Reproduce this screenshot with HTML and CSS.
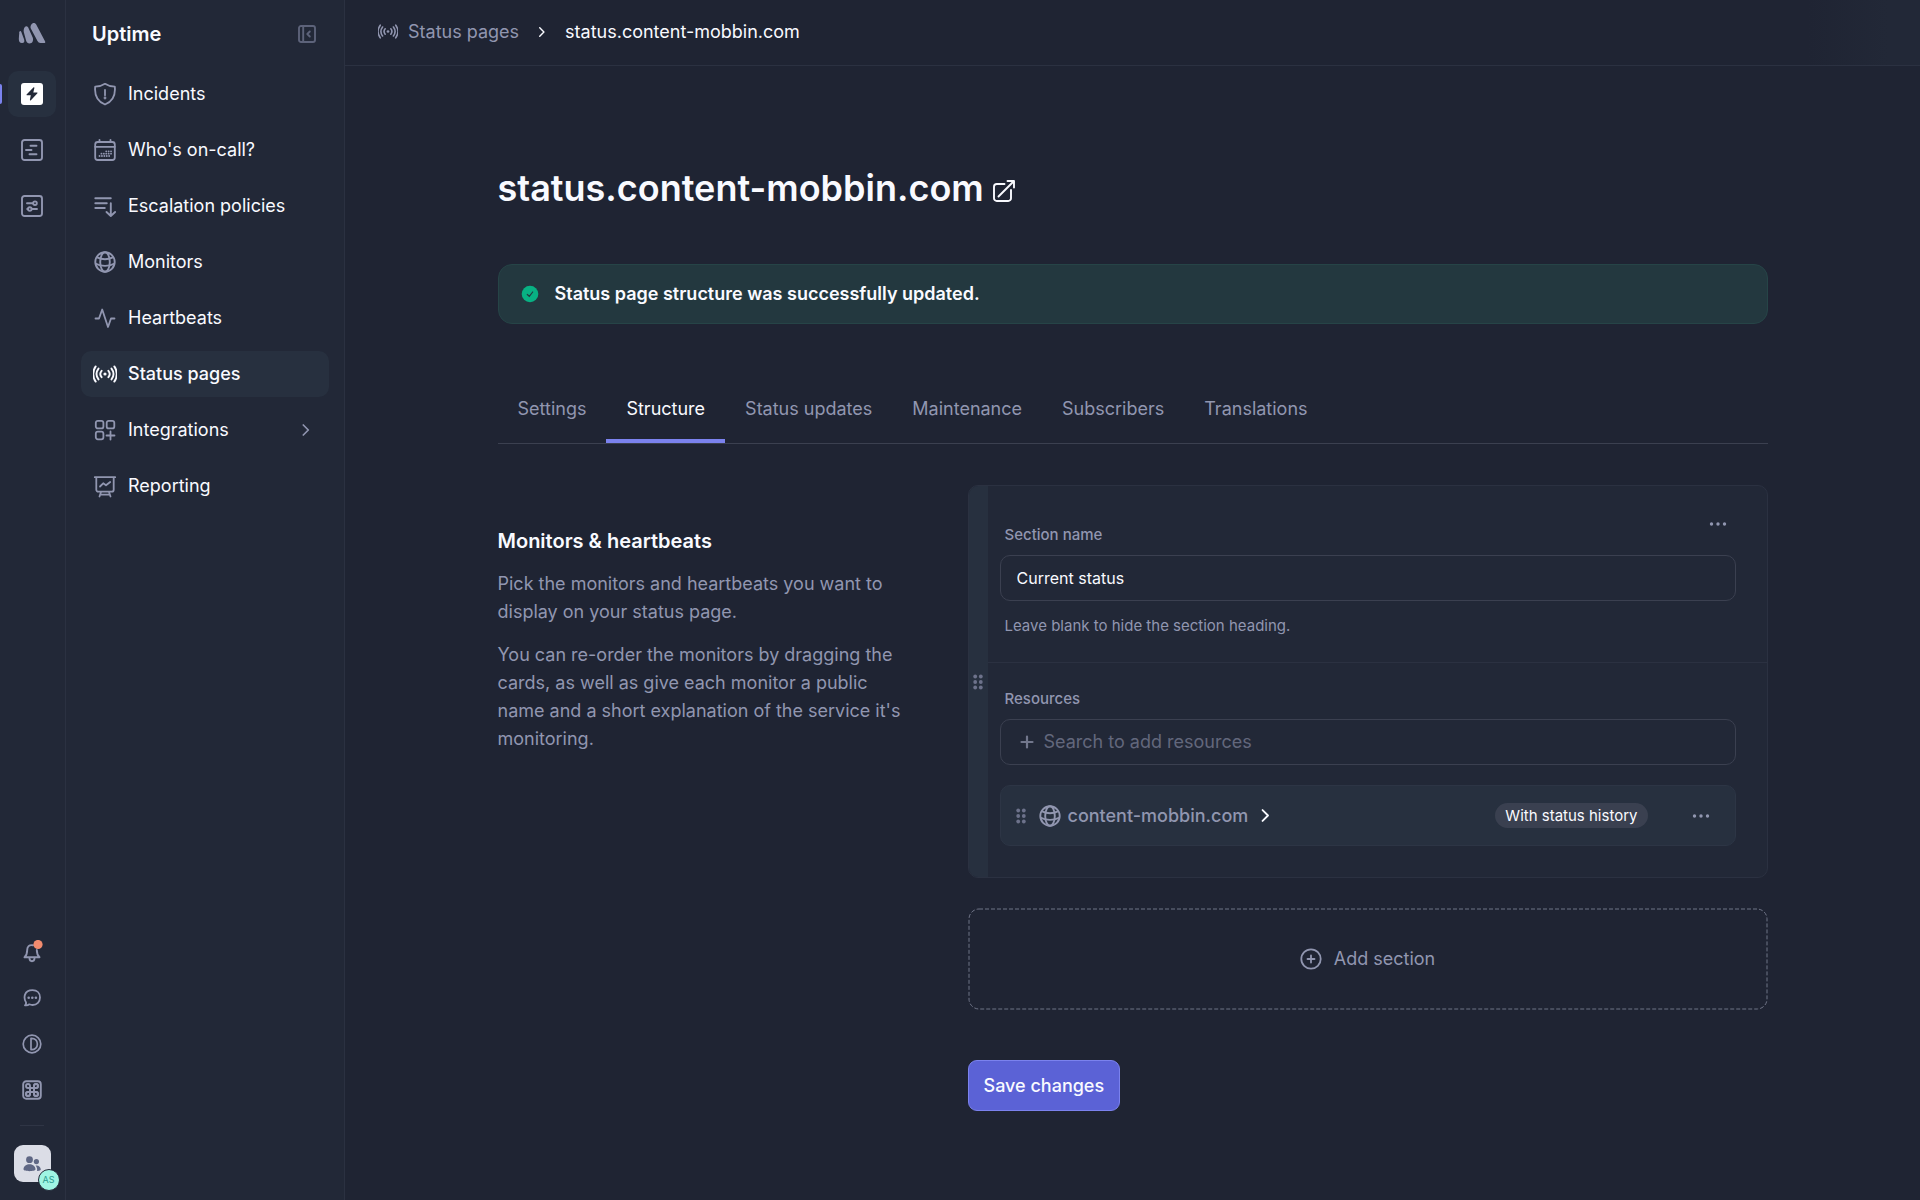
FILE: index.html
```html
<!DOCTYPE html>
<html lang="en">
<head>
<meta charset="utf-8">
<meta name="viewport" content="width=device-width, initial-scale=1">
<title>status.content-mobbin.com | Uptime</title>
<link rel="stylesheet" href="styles.css">
</head>
<body>
<svg class="sprite" aria-hidden="true">
  <symbol id="i-globe" viewBox="0 0 22 22">
    <g fill="none" stroke="currentColor" stroke-width="1.9">
      <circle cx="11" cy="11" r="9.7"/><ellipse cx="11" cy="11" rx="4.8" ry="9.7"/>
      <path d="M3 6.4Q11 10 19 6.4M1.4 12.6Q11 17.2 20.6 12.6"/>
    </g>
  </symbol>
  <symbol id="i-signal" viewBox="0 0 24 18">
    <circle cx="12" cy="9" r="1.6" fill="currentColor"/>
    <g fill="none" stroke="currentColor" stroke-width="1.9" stroke-linecap="round">
      <path d="M8.600 5.800a5 5 0 0 0 0 6.400M15.400 5.800a5 5 0 0 1 0 6.400M5.500 3.600a9 9 0 0 0 0 10.800M18.500 3.600a9 9 0 0 1 0 10.800M2.700 1.400a13 13 0 0 0 0 15.200M21.300 1.400a13 13 0 0 1 0 15.200"/>
    </g>
  </symbol>
  <symbol id="i-chevron" viewBox="0 0 8 12">
    <path d="M1.3 1l5 5-5 5" fill="none" stroke="currentColor" stroke-width="1.700" stroke-linecap="round" stroke-linejoin="round"/>
  </symbol>
  <symbol id="i-dots" viewBox="0 0 18 4">
    <g fill="currentColor"><circle cx="2.5" cy="2" r="1.7"/><circle cx="9" cy="2" r="1.7"/><circle cx="15.5" cy="2" r="1.7"/></g>
  </symbol>
  <symbol id="i-grip" viewBox="0 0 10 16">
    <g fill="currentColor"><circle cx="2.2" cy="2.5" r="1.9"/><circle cx="7.8" cy="2.5" r="1.9"/><circle cx="2.2" cy="8" r="1.9"/><circle cx="7.8" cy="8" r="1.9"/><circle cx="2.2" cy="13.5" r="1.9"/><circle cx="7.8" cy="13.5" r="1.9"/></g>
  </symbol>
</svg>
<div class="app">
  <nav class="rail" aria-label="Products">
    <a class="logo" href="#" aria-label="Home">
      <svg width="28" height="22" viewBox="0 0 28 22" fill="currentColor"><path d="M13.2 2.8C14.4.6 17 .4 18.2 2.6L27 19.2c.7 1.300.1 1.800-1.200 1.800H22.500c-1.500 0-2.300-.7-3-2L12.800 6.400c-.6-1.300-.2-2.500.4-3.600z"/><path d="M6.200 6.100c.6-1.900 2.600-2.800 3.900-.8l4.600 10.300c1 3-.2 6-3.200 6-1.700-.2-2.700-1.200-3.300-2.600L5.900 10.400c-.4-1.400-.2-2.900.3-4.300z"/><path d="M1.300 10.300c.3-1.500 1.500-1.600 2-.4l2.800 7.600c.8 2.500-.4 3.700-2.200 3.500C1.700 20.700.9 19.400.8 16.900z"/></svg>
    </a>
    <div class="rail-list">
      <a class="rail-item active" href="#" aria-label="Uptime">
        <svg width="22" height="22" viewBox="0 0 22 22"><rect width="22" height="22" rx="3" fill="#fff"/><path d="M12.400 4.500L5.800 11.200c-.5.500-.3 1 .4 1h3.600l-.9 4.600c-.1.800.5 1 1 .5l6.300-6.700c.5-.5.300-1-.4-1h-3.500l1.100-4.500c.2-.8-.5-1.100-1-.6z" fill="#222837"/></svg>
      </a>
      <a class="rail-item" href="#" aria-label="Logs">
        <svg width="22" height="22" viewBox="0 0 22 22" fill="none" stroke="currentColor" stroke-width="1.900" stroke-linecap="round"><rect x="1" y="1" width="20" height="20" rx="2.500"/><path d="M9.500 6.800h6M5 11h5.500M8.500 15.200h7"/></svg>
      </a>
      <a class="rail-item" href="#" aria-label="Settings">
        <svg width="22" height="22" viewBox="0 0 22 22" fill="none" stroke="currentColor" stroke-width="1.900" stroke-linecap="round"><rect x="1" y="1" width="20" height="20" rx="2.500"/><path d="M6 8.200h6M11 14h5M6.200 14h.5"/><circle cx="14" cy="8.200" r="1.800"/><circle cx="8.800" cy="14" r="1.800"/></svg>
      </a>
    </div>
    <div class="rail-foot">
      <button type="button" class="rail-btn" aria-label="Notifications">
        <svg width="22" height="24" viewBox="0 0 22 24" fill="none" stroke="currentColor" stroke-width="1.900" stroke-linecap="round" stroke-linejoin="round"><path d="M12 5.300C8 4.400 6.200 7 6.200 10c0 4.500-1.300 6-2.700 7.300h15c-1.400-1.300-2.700-3.300-2.700-7.300"/><path d="M8.500 18.500c.2 3.600 4.800 3.600 5 0"/><circle cx="17" cy="4.500" r="4.600" fill="#f28b6e" stroke="none"/></svg>
      </button>
      <button type="button" class="rail-btn" aria-label="Chat">
        <svg width="18" height="18" viewBox="0 0 18 18" fill="none" stroke="currentColor" stroke-width="1.800" stroke-linejoin="round"><path d="M9.500 1.200c4.500 0 7.500 3 7.500 7.300s-3 7.500-7.500 7.500c-1.300 0-2.300-.3-3.200-.7-1.100.9-2.700 1.300-4.300 1 .9-.8 1.300-1.700 1-2.900C.4 9 .8 1.200 9.500 1.200z"/><g fill="currentColor" stroke="none"><circle cx="5.700" cy="8.800" r="1.300"/><circle cx="9.300" cy="8.800" r="1.300"/><circle cx="12.900" cy="8.800" r="1.300"/></g></svg>
      </button>
      <button type="button" class="rail-btn" aria-label="Theme">
        <svg width="20" height="20" viewBox="0 0 20 20" fill="none" stroke="currentColor" stroke-width="1.700" stroke-linejoin="round"><circle cx="10" cy="10" r="8.800"/><path d="M9 4.300c8.500-.6 8.500 12 0 11.400z"/></svg>
      </button>
      <button type="button" class="rail-btn" aria-label="Shortcuts">
        <svg width="20" height="20" viewBox="0 0 20 20" fill="none" stroke="currentColor" stroke-width="1.900"><rect x="1.200" y="1.200" width="17.600" height="17.600" rx="3"/><path d="M8 8V6a2 2 0 1 0-2 2zh4V6a2 2 0 1 1 2 2h-2v4h2a2 2 0 1 1-2 2v-2H8v2a2 2 0 1 1-2-2h2z"/><path d="M8 8h4v4H8zM12 8V6a2 2 0 1 1 2 2zM12 12h2a2 2 0 1 1-2 2zM8 12v2a2 2 0 1 1-2-2z"/></svg>
      </button>
      <hr>
      <button type="button" class="avatar" aria-label="Account">
        <svg width="18" height="16" viewBox="0 0 18 16" fill="#5f6784"><circle cx="6.500" cy="3.700" r="3.400"/><circle cx="13.400" cy="5.600" r="2.600"/><path d="M.5 13.300c.3-6.600 11.700-6.600 12 0 .1 2.500-12.100 2.500-12 0zM12.600 9.600c3.200-.5 5 1.600 5.200 4 0 .9-1.600 1.400-3.700 1.300.2-2-.2-3.800-1.500-5.300z"/></svg>
        <span>AS</span>
      </button>
    </div>
  </nav>
  <aside class="sidebar">
    <div class="side-head">
      <h2>Uptime</h2>
      <button type="button" class="collapse" aria-label="Collapse sidebar">
        <svg width="18" height="18" viewBox="0 0 18 18" fill="none" stroke="currentColor" stroke-width="1.900" stroke-linecap="round" stroke-linejoin="round"><rect x="1" y="1" width="16" height="16" rx="2"/><path d="M5.200 1v16M11.800 6.500L9.300 9l2.500 2.500"/></svg>
      </button>
    </div>
    <nav class="menu" aria-label="Uptime">
      <a href="#"><svg width="24" height="24" viewBox="0 0 24 24" fill="none" stroke="currentColor" stroke-width="1.800" stroke-linecap="round" stroke-linejoin="round"><path d="M12 1.800c2.800 1.900 6 2.700 9.800 2.800.9 8.800-2.400 15-9.800 17.900C4.600 19.600 1.300 13.400 2.200 4.600 6 4.500 9.200 3.700 12 1.800z"/><path d="M12 8v5.300"/><circle cx="12" cy="16" r=".5" fill="currentColor"/></svg>Incidents</a>
      <a href="#"><svg width="24" height="24" viewBox="0 0 24 24" fill="none" stroke="currentColor" stroke-width="1.800" stroke-linecap="round"><rect x="2.200" y="4" width="19.600" height="18" rx="2.500"/><path d="M2.200 8.800h19.600M6.500 1.800V4M17.500 1.800V4"/><path d="M13.200 13.300h5M8.400 15.700h9.800M6.500 18h9.800" stroke-dasharray=".1 2.300" stroke-width="1.800"/></svg>Who's on-call?</a>
      <a href="#"><svg width="24" height="24" viewBox="0 0 24 24" fill="none" stroke="currentColor" stroke-width="1.900" stroke-linecap="round" stroke-linejoin="round"><path d="M2.300 4.300h15.500M2.300 9.200h11.500M2.300 14h9.500M17.800 9.200v12.500M13.500 18l4.300 4 4.300-4"/></svg>Escalation policies</a>
      <a href="#"><svg width="24" height="22"><use href="#i-globe"/></svg>Monitors</a>
      <a href="#"><svg width="24" height="24" viewBox="0 0 24 24" fill="none" stroke="currentColor" stroke-width="1.800" stroke-linecap="round" stroke-linejoin="round"><path d="M2.500 12.500H6L9.200 3.500l5.800 17.500 3-8.500h3.500"/></svg>Heartbeats</a>
      <a href="#" class="active" aria-current="page"><svg width="24" height="18"><use href="#i-signal"/></svg>Status pages</a>
      <a href="#"><svg width="24" height="24" viewBox="0 0 24 24" fill="none" stroke="currentColor" stroke-width="1.800" stroke-linecap="round"><rect x="2.800" y="2.800" width="7.600" height="7.600" rx="2"/><rect x="13.700" y="2.800" width="7.600" height="7.600" rx="2"/><rect x="2.800" y="13.700" width="7.600" height="7.600" rx="2"/><path d="M17.500 13.500v8M13.500 17.500h8"/></svg>Integrations<svg class="more" width="8" height="12"><use href="#i-chevron"/></svg></a>
      <a href="#"><svg width="24" height="24" viewBox="0 0 24 24" fill="none" stroke="currentColor" stroke-width="1.800" stroke-linecap="round" stroke-linejoin="round"><path d="M1.800 3.200h20.400M3.300 3.200v12.500a2 2 0 0 0 2 2h13.400a2 2 0 0 0 2-2V3.200M8 18l-1.500 4.500M16 18l1.500 4.500M7.200 20.700h9.600M7 12.500l3.200-3.200 2.800 2L17.200 8"/></svg>Reporting</a>
    </nav>
  </aside>
  <div class="page">
    <header class="topbar">
      <a href="#"><svg width="20" height="15"><use href="#i-signal"/></svg>Status pages</a>
      <svg width="8" height="10"><use href="#i-chevron"/></svg>
      <span>status.content-mobbin.com</span>
    </header>
    <main>
      <div class="title">
        <h1>status.content-mobbin.com</h1>
        <a href="#" aria-label="Open status page"><svg width="24" height="24" viewBox="0 0 24 24" fill="none" stroke="currentColor" stroke-width="1.900" stroke-linecap="round" stroke-linejoin="round"><path d="M12.500 5H4.800A2.800 2.800 0 0 0 2 7.800v11.400A2.800 2.800 0 0 0 4.800 22h11.400a2.800 2.800 0 0 0 2.800-2.800V11M6.500 17.500L22 2M15.500 2H22v6.500"/></svg></a>
      </div>
      <div class="alert" role="status">
        <svg width="18" height="18" viewBox="0 0 18 18"><circle cx="9" cy="9" r="8.300" fill="#08b183"/><path d="M6.300 9.500L8.300 11.300 11.700 7" fill="none" stroke="#223a3f" stroke-width="1.200" stroke-linecap="round"/></svg>
        Status page structure was successfully updated.
      </div>
      <nav class="tabs" aria-label="Status page">
        <a href="#">Settings</a><a href="#" class="active" aria-current="page">Structure</a><a href="#">Status updates</a><a href="#">Maintenance</a><a href="#">Subscribers</a><a href="#">Translations</a>
      </nav>
      <form class="columns">
        <div class="intro">
          <h3>Monitors &amp; heartbeats</h3>
          <p>Pick the monitors and heartbeats you want to display on your status page.</p>
          <p>You can re-order the monitors by dragging the cards, as well as give each monitor a public name and a short explanation of the service it's monitoring.</p>
        </div>
        <div class="editor">
          <section class="card">
            <div class="handle"><svg width="10" height="16"><use href="#i-grip"/></svg></div>
            <div class="card-body">
              <div class="part">
                <button type="button" class="dots corner" aria-label="Section options"><svg width="18" height="4"><use href="#i-dots"/></svg></button>
                <label for="section-name">Section name</label>
                <input class="field" id="section-name" type="text" value="Current status">
                <p class="help">Leave blank to hide the section heading.</p>
              </div>
              <div class="part resources">
                <label for="search">Resources</label>
                <div class="field search">
                  <svg width="14" height="14" viewBox="0 0 14 14"><path d="M7 1.500v11M1.500 7h11" stroke="currentColor" stroke-width="2.200" stroke-linecap="round"/></svg>
                  <input id="search" type="text" placeholder="Search to add resources">
                </div>
                <div class="resource">
                  <svg class="grip" width="10" height="16"><use href="#i-grip"/></svg>
                  <svg class="globe" width="22" height="22"><use href="#i-globe"/></svg>
                  <a href="#">content-mobbin.com</a>
                  <svg class="go" width="9" height="13"><use href="#i-chevron"/></svg>
                  <span class="pill">With status history</span>
                  <button type="button" class="dots" aria-label="Resource options"><svg width="18" height="4"><use href="#i-dots"/></svg></button>
                </div>
              </div>
            </div>
          </section>
          <button type="button" class="add">
            <svg class="dash" aria-hidden="true"><rect class="dash-rect" rx="10"/></svg>
            <svg width="22" height="22" viewBox="0 0 22 22" fill="none" stroke="currentColor" stroke-width="1.800" stroke-linecap="round"><circle cx="11" cy="11" r="9.700"/><path d="M11 7.500v7M7.500 11h7"/></svg>
            Add section
          </button>
          <button type="submit" class="save">Save changes</button>
        </div>
      </form>
    </main>
  </div>
</div>
</body>
</html>
```
FILE: styles.css
```css
:root {
  --bg: #1f2433;
  --panel: #222837;
  --raised: #27303f;
  --line: #2b3141;
  --line-strong: #3b4050;
  --muted: #9196b0;
  --text: #f9faff;
}
* { box-sizing: border-box; }
body {
  margin: 0;
  background: var(--bg);
  color: var(--text);
  font: 400 18px/28px Inter, "Liberation Sans", sans-serif;
}
a { color: inherit; text-decoration: none; }
button { border: 0; padding: 0; background: none; color: inherit; font: inherit; cursor: pointer; }
input { font: inherit; color: inherit; }
h1, h2, h3, p { margin: 0; }
svg { flex: none; display: block; }
.sprite { display: none; }
.app { display: flex; min-height: 100vh; }

/* Product rail */
.rail {
  flex: none;
  width: 66px;
  height: 100vh;
  position: sticky;
  top: 0;
  display: flex;
  flex-direction: column;
  align-items: center;
  padding-right: 1px;
  background: var(--panel);
  border-right: 1px solid var(--line);
  color: var(--muted);
}
.logo { padding: 22px 0 0; height: 71px; }
.rail-list { display: flex; flex-direction: column; gap: 10px; width: 100%; align-items: center; }
.rail-item {
  width: 48px;
  height: 46px;
  display: grid;
  place-items: center;
  border-radius: 10px;
}
.rail-item.active { background: var(--raised); }
.rail-item.active::before {
  content: "";
  position: absolute;
  left: 0;
  width: 2px;
  height: 20px;
  border-radius: 0 2px 2px 0;
  background: #7b82ee;
}
.rail-foot { margin-top: auto; padding-bottom: 18px; display: flex; flex-direction: column; align-items: center; }
.rail-btn { width: 46px; height: 46px; display: grid; place-items: center; }
.rail-foot hr { width: 24px; margin: 12px 0 19px; border: 0; border-top: 1px solid #2f3545; }
.avatar {
  position: relative;
  width: 37px;
  height: 37px;
  display: grid;
  place-items: center;
  border-radius: 9px;
  background: #dbdde6;
}
.avatar span {
  position: absolute;
  right: -9px;
  bottom: -9px;
  width: 22px;
  height: 22px;
  border: 1px solid var(--panel);
  border-radius: 50%;
  background: #9ff5e3;
  color: #2a9a8d;
  font-size: 9px;
  line-height: 20px;
  text-align: center;
}

/* Section menu */
.sidebar {
  flex: none;
  width: 279px;
  background: var(--panel);
  border-right: 1px solid var(--line);
}
.side-head { display: flex; align-items: center; justify-content: space-between; height: 69px; padding: 0 28px 2px 26px; }
.side-head h2 { font-size: 20px; font-weight: 600; }
.collapse { color: #5d637a; }
.menu { display: flex; flex-direction: column; gap: 10px; padding: 2px 15px; }
.menu a { display: flex; align-items: center; gap: 11px; height: 46px; padding: 0 12px; border-radius: 10px; }
.menu svg { color: var(--muted); }
.menu .active { background: var(--raised); font-weight: 500; }
.menu .active svg { color: var(--text); }
.menu .more { margin: 0 7px 0 auto; }

/* Page */
.page { flex: 1; min-width: 0; }
.topbar {
  display: flex;
  align-items: center;
  height: 66px;
  padding: 0 33px 2px;
  border-bottom: 1px solid var(--line);
  background: linear-gradient(to left, var(--panel) 32px, var(--bg) 112px);
}
.topbar a { display: flex; align-items: center; gap: 10px; color: var(--muted); }
.topbar > svg { margin: 0 19px; }
main { max-width: 1318px; margin: 0 auto; padding: 98px 24px 88px; }
.title { display: flex; align-items: center; gap: 8px; }
h1 { font-size: 36px; line-height: 48px; font-weight: 600; }
.title a { padding-top: 6px; }
.alert {
  display: flex;
  align-items: center;
  gap: 16px;
  height: 60px;
  margin-top: 52px;
  padding: 0 22px;
  border: 1px solid #264447;
  border-radius: 14px;
  background: #23383f;
  font-weight: 600;
}
.tabs { display: flex; margin-top: 50px; border-bottom: 1px solid var(--line-strong); color: var(--muted); }
.tabs a { padding: 21px 20px 16px; border-bottom: 4px solid transparent; }
.tabs .active { color: var(--text); border-color: #7b82ee; }
.columns { display: grid; grid-template-columns: minmax(0, 404px) minmax(0, 800px); justify-content: space-between; margin-top: 41px; }
.intro { padding-top: 42px; color: var(--muted); }
.intro h3 { color: var(--text); font-size: 20px; font-weight: 600; }
.intro p { margin-top: 15px; }
.card { display: flex; border: 1px solid var(--line); border-radius: 10px; background: var(--panel); overflow: hidden; }
.handle { flex: none; width: 19px; display: grid; place-items: center; background: var(--raised); color: #6d728b; }
.card-body { flex: 1; min-width: 0; }
.part { position: relative; padding: 37px 31px 24px 12px; font-size: 15px; line-height: 24px; color: var(--muted); }
.part label { display: block; margin: 0 5px 8px; font-weight: 500; }
.field {
  display: block;
  width: 100%;
  height: 46px;
  padding: 0 16px;
  border: 1px solid var(--line-strong);
  border-radius: 10px;
  background: none;
  color: var(--text);
  font-size: 16px;
  outline: none;
}
.help { margin: 13px 5px 0; }
.resources { padding-top: 24px; padding-bottom: 31px; border-top: 1px solid var(--line); }
.search { display: flex; align-items: center; gap: 10px; padding: 0 19px; color: #72778c; }
.search input { flex: 1; min-width: 0; padding: 0; border: 0; background: none; outline: none; font-size: 18px; }
.search input::placeholder { color: #62677c; }
.resource {
  display: flex;
  align-items: center;
  height: 61px;
  margin-top: 20px;
  padding: 0 20px 0 15px;
  border: 1px solid #2d3545;
  border-radius: 10px;
  background: var(--raised);
  font-size: 18px;
  font-weight: 500;
}
.grip { color: #6d728b; }
.globe { margin: 0 7px 0 13px; }
.go { margin-left: 13px; color: var(--text); }
.pill { margin-left: auto; padding: 0 10px; border-radius: 13px; background: #3a4050; color: var(--text); font-size: 15px; font-weight: 400; line-height: 25px; }
.dots { width: 28px; height: 28px; display: grid; place-items: center; }
.resource .dots { margin-left: 39px; }
.corner { position: absolute; top: 24px; right: 35px; }
.add {
  position: relative;
  display: flex;
  align-items: center;
  justify-content: center;
  gap: 12px;
  width: 100%;
  height: 102px;
  margin-top: 30px;
  color: var(--muted);
}
.dash { position: absolute; inset: 0; width: 100%; height: 100%; }
.dash-rect {
  x: 1px;
  y: 1px;
  width: calc(100% - 2px);
  height: calc(100% - 2px);
  fill: none;
  stroke: #6f7487;
  stroke-dasharray: 4 2;
}
.save {
  height: 51px;
  margin-top: 50px;
  padding: 0 15px;
  border: 1px solid #7b82ee;
  border-radius: 9px;
  background: #5b62d6;
  font-weight: 500;
}
@media (max-width: 1100px) {
  .columns { grid-template-columns: 1fr; row-gap: 32px; }
}
```
